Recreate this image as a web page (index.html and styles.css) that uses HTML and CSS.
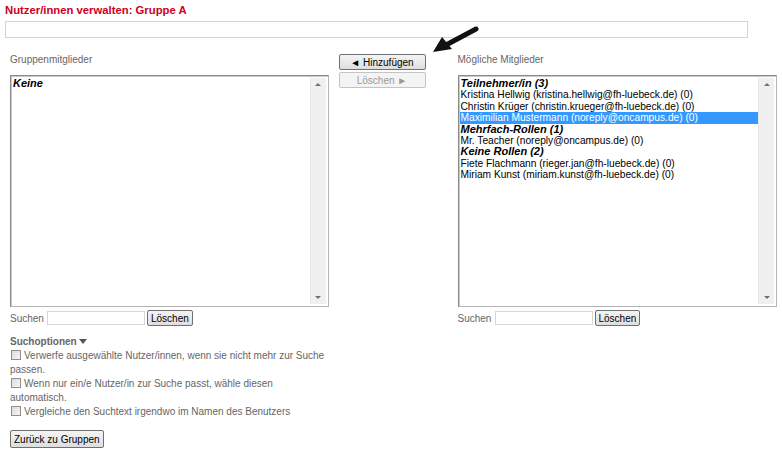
FILE: index.html
```html
<!DOCTYPE html>
<html lang="de">
<head>
    <meta charset="UTF-8">
    <title>Nutzer/innen verwalten: Gruppe A</title>
    <link rel="stylesheet" href="styles.css">
</head>
<body>

    <h2 class="page-title">Nutzer/innen verwalten: Gruppe A</h2>
    <div class="top-field"></div>

    <div class="manage">
        <!-- Gruppenmitglieder -->
        <div class="column column-left">
            <div class="col-label">Gruppenmitglieder</div>
            <div class="listbox">
                <div class="list-items">
                    <div class="group-head">Keine</div>
                </div>
                <div class="scrollbar">
                    <span class="sb-arrow up"></span>
                    <span class="sb-arrow down"></span>
                </div>
            </div>
            <div class="search-row">
                <span class="search-label">Suchen</span>
                <span class="search-input"></span>
                <button class="btn">Löschen</button>
            </div>
        </div>

        <!-- Buttons -->
        <div class="actions">
            <button class="btn btn-wide">&#9668; Hinzufügen</button>
            <button class="btn btn-wide" disabled>Löschen &#9658;</button>
        </div>

        <!-- Mögliche Mitglieder -->
        <div class="column column-right">
            <div class="col-label">Mögliche Mitglieder</div>
            <div class="listbox">
                <div class="list-items">
                    <div class="group-head">Teilnehmer/in (3)</div>
                    <div class="item">Kristina Hellwig (kristina.hellwig@fh-luebeck.de) (0)</div>
                    <div class="item">Christin Krüger (christin.krueger@fh-luebeck.de) (0)</div>
                    <div class="item selected">Maximilian Mustermann (noreply@oncampus.de) (0)</div>
                    <div class="group-head">Mehrfach-Rollen (1)</div>
                    <div class="item">Mr. Teacher (noreply@oncampus.de) (0)</div>
                    <div class="group-head">Keine Rollen (2)</div>
                    <div class="item">Fiete Flachmann (rieger.jan@fh-luebeck.de) (0)</div>
                    <div class="item">Miriam Kunst (miriam.kunst@fh-luebeck.de) (0)</div>
                </div>
                <div class="scrollbar">
                    <span class="sb-arrow up"></span>
                    <span class="sb-arrow down"></span>
                </div>
            </div>
            <div class="search-row">
                <span class="search-label">Suchen</span>
                <span class="search-input"></span>
                <button class="btn">Löschen</button>
            </div>
        </div>

        <!-- Hinweis-Pfeil -->
        <svg class="pointer" width="50" height="30" viewBox="0 0 50 30">
            <path d="M46 4 L16 20" stroke="#111" stroke-width="5" stroke-linecap="round"/>
            <path d="M3 27 L12 12 L22 24 Z" fill="#111"/>
        </svg>
    </div>

    <!-- Suchoptionen -->
    <div class="options">
        <div class="options-title">Suchoptionen <span class="caret"></span></div>
        <div class="option"><span class="check"></span>Verwerfe ausgewählte Nutzer/innen, wenn sie nicht mehr zur Suche passen.</div>
        <div class="option"><span class="check"></span>Wenn nur ein/e Nutzer/in zur Suche passt, wähle diesen automatisch.</div>
        <div class="option"><span class="check"></span>Vergleiche den Suchtext irgendwo im Namen des Benutzers</div>
    </div>

    <button class="btn btn-back">Zurück zu Gruppen</button>

</body>
</html>
```

FILE: styles.css
```css
/* Page */
body {
    margin: 0;
    padding: 2px 5px;
    font-family: "Liberation Sans", Arial, sans-serif;
    font-size: 10px;
    color: #000;
    background: #fff;
}

.page-title {
    margin: 0;
    font-size: 11.3px;
    line-height: 16px;
    color: #cc0022;
}

.top-field {
    width: 741px;
    height: 15px;
    margin-top: 3px;
    border: 1px solid #d4d4d4;
}

/* Two lists with buttons between */
.manage {
    position: relative;
    display: flex;
    margin-top: 13px;
    padding-left: 5px;
}

.column-left {
    width: 320px;
}

.column-right {
    width: 321px;
    margin-left: 32px;
}

.col-label {
    color: #666;
    line-height: 13px;
    margin-top: 2px;
    height: 22px;
}

.listbox {
    display: flex;
    height: 226px;
    border: 1px solid #8a8a8a;
    border-right-color: #b5b5b5;
    border-bottom-color: #b5b5b5;
    box-shadow: inset 1px 1px 0 #c8c8c8;
    padding: 2px 2px 2px 1px;
}

.list-items {
    flex: 1;
}

.group-head {
    font-weight: bold;
    font-style: italic;
    font-size: 11px;
    line-height: 11.4px;
    padding-left: 1px;
}

.item {
    font-size: 10.2px;
    line-height: 11.4px;
    padding-left: 1px;
    white-space: nowrap;
}

.item.selected {
    background: #3399ff;
    color: #fff;
}

.scrollbar {
    width: 15px;
    background: #f0f0f0;
    border-left: 1px solid #e6e6e6;
    display: flex;
    flex-direction: column;
    justify-content: space-between;
    align-items: center;
    padding: 5px 0;
}

.sb-arrow {
    width: 0;
    height: 0;
    border-left: 3px solid transparent;
    border-right: 3px solid transparent;
}

.sb-arrow.up {
    border-bottom: 3px solid #707070;
}

.sb-arrow.down {
    border-top: 3px solid #707070;
}

/* Search row under each list */
.search-row {
    display: flex;
    align-items: center;
    margin-top: 3px;
}

.search-label {
    color: #666;
    width: 37px;
}

.search-input {
    width: 96px;
    height: 12px;
    border: 1px solid #d6d6d6;
}

/* Buttons */
.btn {
    font-family: "Liberation Sans", Arial, sans-serif;
    font-size: 10px;
    color: #000;
    height: 16px;
    padding: 0 3px;
    margin-left: 2px;
    border: 1px solid #707070;
    border-radius: 2px;
    background: linear-gradient(#f4f4f4, #dedede);
    line-height: 13px;
}

.btn:disabled {
    color: #999;
    border-color: #c4c4c4;
    background: #f4f4f4;
}

.actions {
    display: flex;
    flex-direction: column;
    gap: 2px;
    margin-left: 10px;
    padding-top: 3px;
}

.btn-wide {
    width: 87px;
    height: 16px;
    margin-left: 0;
}

.pointer {
    position: absolute;
    left: 425px;
    top: -26px;
}

/* Search options */
.options {
    margin-top: 9px;
    padding-left: 5px;
    width: 318px;
    color: #666;
}

.options-title {
    font-weight: bold;
    line-height: 14px;
}

.caret {
    display: inline-block;
    border-left: 4px solid transparent;
    border-right: 4px solid transparent;
    border-top: 5px solid #555;
    vertical-align: 1px;
}

.option {
    line-height: 14px;
}

.check {
    display: inline-block;
    width: 8px;
    height: 8px;
    border: 1px solid #8f8f8f;
    background: linear-gradient(135deg, #dcdcdc, #f6f6f6);
    margin: 0 3px 0 1px;
    vertical-align: -1px;
}

.btn-back {
    margin: 11px 0 0 5px;
    height: 18px;
}
```
